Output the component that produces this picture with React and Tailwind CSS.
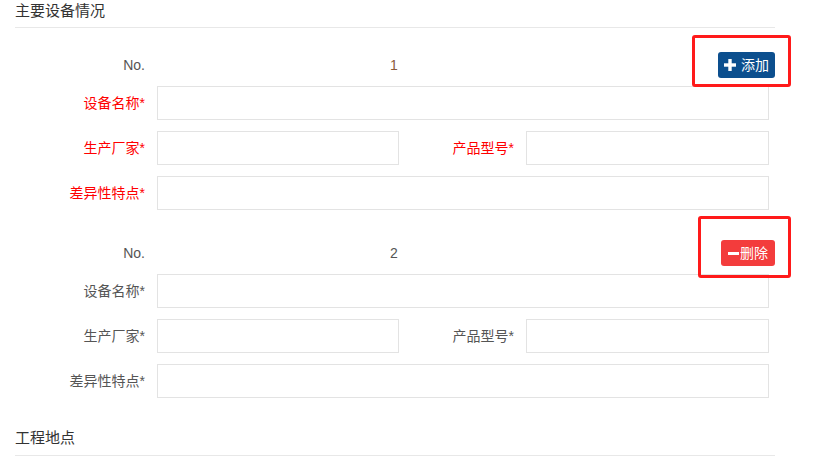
import React from "react";

const FONT = { fontFamily: '"Liberation Sans", "Noto Sans CJK SC", sans-serif' };

const blocks = [
  { no: 1, required: true, action: "add" },
  { no: 2, required: false, action: "remove" },
];

// plain bordered input, no radius
const Field = ({ className = "" }) => (
  <input
    type="text"
    className={`h-[34px] border border-[#e3e3e3] bg-white outline-none ${className}`}
  />
);

const Label = ({ text, red, className = "" }) => (
  <label
    className={`text-right text-[14px] leading-[34px] ${
      red ? "text-[#f00]" : "text-[#555]"
    } ${className}`}
  >
    {text}*
  </label>
);

const AddButton = () => (
  <button className="flex h-[26px] w-[57px] items-center justify-center gap-[5px] rounded-[3px] bg-[#0c4f8e] text-[14px] text-white">
    <svg width="12" height="12" viewBox="0 0 12 12">
      <rect x="4.3" y="0" width="3.4" height="12" fill="#fff" />
      <rect x="0" y="4.3" width="12" height="3.4" fill="#fff" />
    </svg>
    添加
  </button>
);

const RemoveButton = () => (
  <button className="flex h-[26px] w-[54px] items-center justify-center gap-[1px] rounded-[3px] bg-[#f33c3c] text-[14px] text-white">
    <span className="block h-[3px] w-[11px] bg-white" />
    删除
  </button>
);

const EquipmentBlock = ({ no, required, action }) => (
  <div className="flex flex-col">
    {/* ---------- NO. ROW ---------- */}
    <div className="mb-[8px] flex h-[26px] items-center">
      <span className="w-[130px] text-right text-[14px] text-[#555]">No.</span>
      <span
        className={`ml-[12px] w-[474px] text-center text-[14px] ${
          required ? "text-[#8a5a3b]" : "text-[#555]"
        }`}
      >
        {no}
      </span>
      <div className="flex flex-1 justify-end">
        {action === "add" ? <AddButton /> : <RemoveButton />}
      </div>
    </div>

    {/* ---------- FIELDS ---------- */}
    <div className="flex flex-col gap-[11px]">
      <div className="flex">
        <Label text="设备名称" red={required} className="w-[130px]" />
        <Field className="ml-[12px] w-[612px]" />
      </div>
      <div className="flex">
        <Label text="生产厂家" red={required} className="w-[130px]" />
        <Field className="ml-[12px] w-[242px]" />
        <Label text="产品型号" red={required} className="w-[115px]" />
        <Field className="ml-[12px] w-[243px]" />
      </div>
      <div className="flex">
        <Label text="差异性特点" red={required} className="w-[130px]" />
        <Field className="ml-[12px] w-[612px]" />
      </div>
    </div>
  </div>
);

export default function App() {
  return (
    <div
      className="relative h-[457px] w-[818px] overflow-hidden bg-white pl-[15px]"
      style={FONT}
    >
      {/* ---------- HEADER ---------- */}
      <div className="w-[760px] border-b border-[#e8e8e8] pb-[6px] text-[15px] leading-[21px] text-[#333]">
        主要设备情况
      </div>

      <div className="mt-[24px] flex w-[760px] flex-col gap-[30px]">
        {blocks.map((b) => (
          <EquipmentBlock key={b.no} {...b} />
        ))}
      </div>

      {/* ---------- NEXT SECTION ---------- */}
      <div className="mt-[29px] w-[760px] border-b border-[#e8e8e8] pb-[7px] text-[15px] leading-[21px] text-[#333]">
        工程地点
      </div>

      {/* annotation boxes */}
      <div className="pointer-events-none absolute left-[692px] top-[35px] h-[52px] w-[99px] rounded-[3px] border-[3px] border-[#ff1a1a]" />
      <div className="pointer-events-none absolute left-[698px] top-[216px] h-[62px] w-[93px] rounded-[3px] border-[3px] border-[#ff1a1a]" />
    </div>
  );
}
